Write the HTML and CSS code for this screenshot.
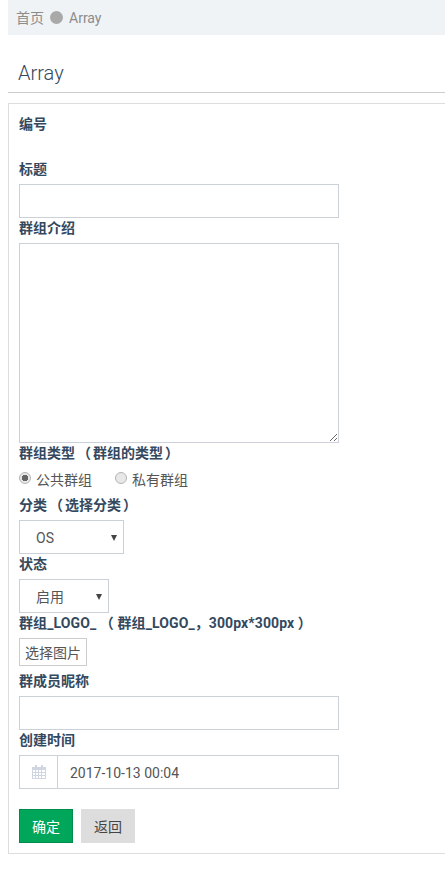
FILE: index.html
```html
<!DOCTYPE html>
<html lang="zh">

<head>
    <meta charset="UTF-8">
    <meta name="viewport" content="width=device-width, initial-scale=1.0">
    <link rel="stylesheet" href="styles.css">
    <title>Array</title>
</head>

<body>
    <div class="page">
        <div class="breadcrumb">
            <a href="#" class="crumb-link">首页</a>
            <span class="crumb-dot"></span>
            <span class="crumb-current">Array</span>
        </div>

        <h1 class="page-title">Array</h1>

        <form class="form-box">
            <div class="form-label">编号</div>
            <div class="form-empty"></div>

            <label class="form-label">标题</label>
            <input type="text" class="form-control">

            <label class="form-label">群组介绍</label>
            <textarea class="form-control form-textarea"></textarea>

            <label class="form-label form-label-tight">群组类型 （ 群组的类型 ）</label>
            <div class="radio-row">
                <label class="radio-item"><input type="radio" name="type" checked><span>公共群组</span></label>
                <label class="radio-item"><input type="radio" name="type"><span>私有群组</span></label>
            </div>

            <label class="form-label form-label-tight">分类 （ 选择分类 ）</label>
            <div class="select-wrap select-category">
                <select class="form-select">
                    <option>OS</option>
                </select>
            </div>

            <label class="form-label">状态</label>
            <div class="select-wrap select-status">
                <select class="form-select">
                    <option>启用</option>
                </select>
            </div>

            <label class="form-label form-label-wide">群组_LOGO_ （ 群组_LOGO_，300px*300px ）</label>
            <button type="button" class="file-button">选择图片</button>

            <label class="form-label">群成员昵称</label>
            <input type="text" class="form-control">

            <label class="form-label">创建时间</label>
            <div class="date-group">
                <span class="date-addon">
                    <svg width="14" height="14" viewBox="0 0 14 14" class="date-icon">
                        <path fill="currentColor" fill-rule="evenodd" d="M3 0h2v2h4V0h2v2h3v12H0V2h3zM1 5v2h2V5zm3 0v2h2V5zm3 0v2h2V5zm3 0v2h3V5zM1 8v2h2V8zm3 0v2h2V8zm3 0v2h2V8zm3 0v2h3V8zM1 11v2h2v-2zm3 0v2h2v-2zm3 0v2h2v-2zm3 0v2h3v-2z"/>
                    </svg>
                </span>
                <input type="text" class="date-input" value="2017-10-13 00:04">
            </div>

            <div class="form-actions">
                <button type="submit" class="btn btn-ok">确定</button>
                <button type="button" class="btn btn-back">返回</button>
            </div>
        </form>
    </div>
</body>

</html>
```

FILE: styles.css
```css
* {
    margin: 0;
    padding: 0;
    box-sizing: border-box;
}

body {
    font-family: Roboto, 'Noto Sans CJK SC', sans-serif;
    font-size: 14px;
    line-height: 20px;
    background-color: #ffffff;
    color: #34495e;
    overflow: hidden;
}

.page {
    width: 800px;
    padding-left: 8px;
}

/* Breadcrumb */
.breadcrumb {
    display: flex;
    align-items: center;
    height: 35px;
    padding-left: 8px;
    background-color: #f0f3f6;
    color: #8c8c8c;
}

.crumb-link {
    color: #8c8c8c;
    text-decoration: none;
}

.crumb-dot {
    width: 13px;
    height: 13px;
    margin: 0 6px;
    border-radius: 50%;
    background-color: #a9a9a9;
}

/* Title */
.page-title {
    height: 58px;
    padding: 26px 0 0 10px;
    border-bottom: 1px solid #cccccc;
    font-size: 20px;
    font-weight: 300;
    line-height: 24px;
    color: #34495e;
}

/* Form */
.form-box {
    margin-top: 10px;
    padding: 10px;
    border: 1px solid #dddddd;
}

.form-label {
    display: block;
    margin-bottom: 5px;
    font-weight: 700;
}

.form-label-tight {
    word-spacing: -1.5px;
}

.form-label-wide {
    letter-spacing: 0.1px;
}

.form-empty {
    height: 20px;
}

.form-control {
    display: block;
    width: 320px;
    height: 34px;
    padding: 6px 12px;
    border: 1px solid #ccd0d9;
    font-family: inherit;
    font-size: 14px;
    color: #555555;
    background-color: #ffffff;
    outline: none;
}

.form-textarea {
    height: 200px;
}

.radio-row {
    display: flex;
    align-items: center;
    gap: 23px;
    height: 27px;
    padding-bottom: 3px;
}

.radio-item {
    display: flex;
    align-items: center;
    gap: 5px;
    color: #555555;
}

.radio-item input {
    width: 12px;
    height: 12px;
    margin-bottom: 4px;
    appearance: none;
    border: 1px solid #b4b4b4;
    border-radius: 50%;
    background-color: #e8e8e8;
}

.radio-item input:checked {
    background: radial-gradient(circle, #666666 0 3px, #e8e8e8 3.5px);
}

.select-wrap {
    position: relative;
    height: 34px;
}

.select-wrap::after {
    content: "";
    position: absolute;
    top: 15px;
    border-left: 3px solid transparent;
    border-right: 3px solid transparent;
    border-top: 6px solid #444444;
}

.select-category {
    width: 105px;
}

.select-category::after {
    left: 92px;
}

.select-status {
    width: 90px;
}

.select-status::after {
    left: 77px;
}

.form-select {
    display: block;
    width: 100%;
    height: 34px;
    padding: 2px 16px 0;
    border: 1px solid #ccd0d9;
    border-radius: 0;
    appearance: none;
    font-family: inherit;
    font-size: 14px;
    color: #555555;
    background-color: #ffffff;
    outline: none;
}

.file-button {
    display: block;
    height: 28px;
    width: 68px;
    margin-bottom: 5px;
    border: 1px solid #cccccc;
    background-color: #ffffff;
    font-family: inherit;
    font-size: 14px;
    color: #555555;
}

.date-group {
    display: flex;
    width: 320px;
    height: 34px;
    border: 1px solid #ccd0d9;
}

.date-addon {
    display: flex;
    align-items: center;
    justify-content: center;
    width: 38px;
    border-right: 1px solid #ccd0d9;
    color: #d0d5e2;
}

.date-input {
    flex: 1;
    min-width: 0;
    padding: 2px 12px 0;
    border: none;
    font-family: inherit;
    font-size: 14px;
    color: #555555;
    outline: none;
}

.form-actions {
    display: flex;
    gap: 8px;
    margin-top: 20px;
}

.btn {
    width: 54px;
    height: 34px;
    border: 1px solid transparent;
    font-family: inherit;
    font-size: 14px;
}

.btn-ok {
    background-color: #00a65a;
    border-color: #008d4c;
    color: #ffffff;
}

.btn-back {
    background-color: #dddddd;
    border-color: #dddddd;
    color: #444444;
}
```
